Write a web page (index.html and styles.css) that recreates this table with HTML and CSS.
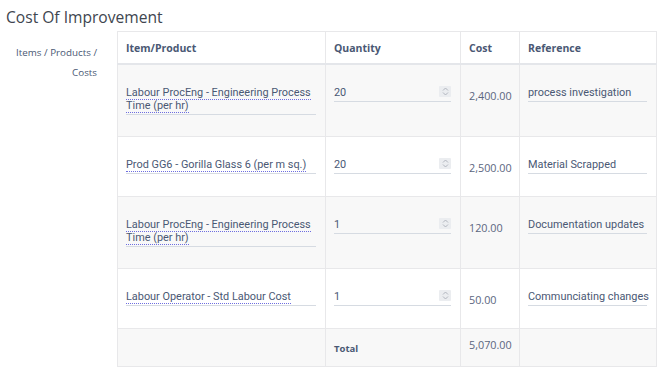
FILE: index.html
```html
<!DOCTYPE html>
<html>
<head>
<meta charset="utf-8">
<link rel="stylesheet" href="styles.css">
</head>
<body>
<div class="page">
  <h1 class="title">Cost Of Improvement</h1>
  <div class="section">
    <div class="label">Items / Products /<br>Costs</div>
    <table class="grid">
      <colgroup>
        <col class="c-item"><col class="c-qty"><col class="c-cost"><col class="c-ref">
      </colgroup>
      <thead>
        <tr><th>Item/Product</th><th>Quantity</th><th>Cost</th><th>Reference</th></tr>
      </thead>
      <tbody>
        <tr class="alt">
          <td><div class="field item"><span class="link">Labour ProcEng - Engineering Process Time (per hr)</span></div></td>
          <td><div class="field qty"><span>20</span><span class="spin"><svg width="7" height="9" viewBox="0 0 7 9"><path d="M1 3.5 3.5 1 6 3.5M1 5.5 3.5 8 6 5.5" fill="none" stroke="#a9afb8" stroke-width="0.9"/></svg></span></div></td>
          <td class="cost">2,400.00</td>
          <td><div class="field ref">process investigation</div></td>
        </tr>
        <tr>
          <td><div class="field item"><span class="link">Prod GG6 - Gorilla Glass 6 (per m sq.)</span></div></td>
          <td><div class="field qty"><span>20</span><span class="spin"><svg width="7" height="9" viewBox="0 0 7 9"><path d="M1 3.5 3.5 1 6 3.5M1 5.5 3.5 8 6 5.5" fill="none" stroke="#a9afb8" stroke-width="0.9"/></svg></span></div></td>
          <td class="cost">2,500.00</td>
          <td><div class="field ref">Material Scrapped</div></td>
        </tr>
        <tr class="alt">
          <td><div class="field item"><span class="link">Labour ProcEng - Engineering Process Time (per hr)</span></div></td>
          <td><div class="field qty"><span>1</span><span class="spin"><svg width="7" height="9" viewBox="0 0 7 9"><path d="M1 3.5 3.5 1 6 3.5M1 5.5 3.5 8 6 5.5" fill="none" stroke="#a9afb8" stroke-width="0.9"/></svg></span></div></td>
          <td class="cost">120.00</td>
          <td><div class="field ref">Documentation updates</div></td>
        </tr>
        <tr>
          <td><div class="field item"><span class="link">Labour Operator - Std Labour Cost</span></div></td>
          <td><div class="field qty"><span>1</span><span class="spin"><svg width="7" height="9" viewBox="0 0 7 9"><path d="M1 3.5 3.5 1 6 3.5M1 5.5 3.5 8 6 5.5" fill="none" stroke="#a9afb8" stroke-width="0.9"/></svg></span></div></td>
          <td class="cost">50.00</td>
          <td><div class="field ref">Communciating changes</div></td>
        </tr>
        <tr class="alt total">
          <td></td>
          <td><div class="total-label">Total</div></td>
          <td><div class="total-value">5,070.00</div></td>
          <td></td>
        </tr>
      </tbody>
    </table>
  </div>
</div>
</body>
</html>
```
FILE: styles.css
```css
html, body {
  margin: 0;
  padding: 0;
  background: #ffffff;
}
body {
  font-family: "Open Sans", "Noto Sans", sans-serif;
  color: #4a5874;
}
.page {
  padding: 7px 0 0 6px;
}
.title {
  margin: 0;
  font-family: "Open Sans", sans-serif;
  font-weight: 400;
  font-size: 15.6px;
  line-height: 20px;
  color: #40454f;
}
.section {
  display: flex;
  align-items: flex-start;
  margin-top: 4px;
}
.label {
  width: 91px;
  flex: none;
  text-align: right;
  font-size: 9.8px;
  line-height: 20px;
  color: #4a5874;
  padding-top: 12px;
}
.grid {
  margin-left: 20px;
  border-collapse: collapse;
  table-layout: fixed;
  width: 539px;
  border: 1px solid #e8e8ea;
}
.c-item { width: 208px; }
.c-qty { width: 135px; }
.c-cost { width: 59px; }
.c-ref { width: 137px; }
.grid th {
  text-align: left;
  font-weight: 700;
  font-size: 10.5px;
  color: #4a5874;
  height: 31px;
  padding: 0 8px;
  border-left: 1px solid #e8e8ea;
  border-bottom: 2px solid #e4e6ea;
  background: #fff;
}
.grid td {
  vertical-align: top;
  padding: 20px 8px 21px;
  border-left: 1px solid #e8e8ea;
  border-top: 1px solid #e8e8ea;
}
.grid tr.alt td {
  background: #f8f8f8;
}
.field {
  font-family: "Roboto", sans-serif;
  font-size: 10.9px;
  line-height: 13px;
  color: #4a5874;
  padding: 1px 0 2px;
  border-bottom: 1px solid #d6dbe2;
  margin-right: 1px;
}
.ref {
  white-space: nowrap;
}
.link {
  border-bottom: 1px dotted #6e6ee0;
}
.qty {
  display: flex;
  justify-content: space-between;
  align-items: flex-start;
}
.spin {
  width: 12px;
  height: 11px;
  background: #ebedf0;
  border-radius: 1px;
  display: flex;
  align-items: center;
  justify-content: center;
  margin-top: 0;
}
.cost {
  font-size: 10.8px;
  color: #5b6680;
}
.grid td.cost {
  padding-top: 23px;
}
.grid tr.total td {
  height: 37px;
  padding: 0 8px;
}
.total-label {
  font-weight: 700;
  font-size: 9.5px;
  line-height: 13px;
  padding-top: 13px;
  color: #4a5874;
}
.total-value {
  font-size: 10.8px;
  line-height: 13px;
  color: #5b6680;
  padding-top: 9px;
}
```
